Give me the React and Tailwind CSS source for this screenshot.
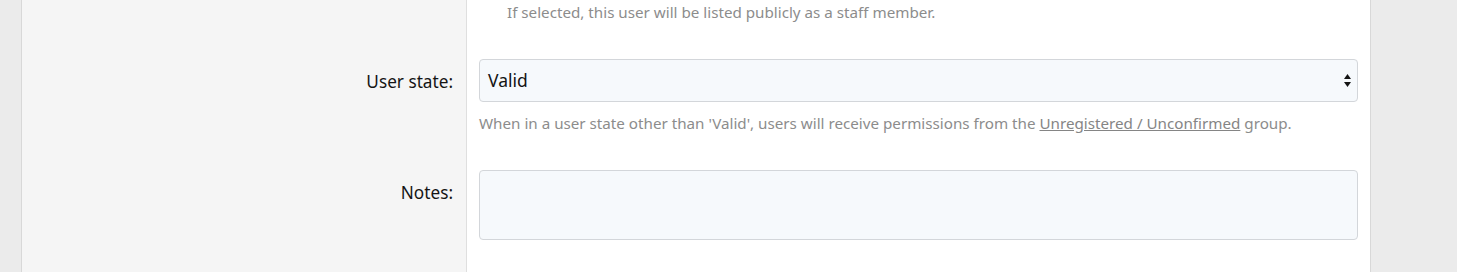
export default function App() {
  return (
    <div className="h-[272px] w-[1457px] overflow-hidden bg-[#ebebeb] pl-[21px] font-['Noto_Sans',sans-serif]">
      <div className="h-full w-[1350px] border-x border-[#d8d8d8] bg-white">
        {/* staff member hint (row cut off above) */}
        <div className="grid h-[40px] grid-cols-[445px_1fr]">
          <div className="border-r border-[#dfdfdf] bg-[#f5f5f5]" />
          <div className="pl-[40px] pt-[2px] text-[15.2px] leading-[20px] text-[#8c8c8c]">
            If selected, this user will be listed publicly as a staff member.
          </div>
        </div>

        {/* user state */}
        <div className="grid grid-cols-[445px_1fr]">
          <div className="border-r border-[#dfdfdf] bg-[#f5f5f5] pr-[13px] pt-[31px] text-right text-[17.2px] leading-[22px] text-[#141414]">
            User state:
          </div>
          <div className="pb-[18px] pl-[12px] pr-[12px] pt-[19px]">
            <div className="flex h-[43px] items-center justify-between rounded-[4px] border border-[#d3d6da] bg-[#f6f9fc] pl-[8px] pr-[6px] text-[17.5px] text-[#141414]">
              <span>Valid</span>
              <svg width="7" height="13" viewBox="0 0 7 13" className="fill-[#141414]">
                <path d="M3.5 0 L7 5 L0 5 Z" />
                <path d="M0 8 L7 8 L3.5 13 Z" />
              </svg>
            </div>
            <p className="mt-[11px] text-[15.2px] leading-[20px] text-[#8c8c8c]">
              When in a user state other than 'Valid', users will receive permissions from the{" "}
              <a href="#" className="text-[#858585] underline">
                Unregistered / Unconfirmed
              </a>{" "}
              group.
            </p>
          </div>
        </div>

        {/* notes */}
        <div className="grid h-[200px] grid-cols-[445px_1fr]">
          <div className="border-r border-[#dfdfdf] bg-[#f5f5f5] pr-[13px] pt-[31px] text-right text-[17.2px] leading-[22px] text-[#141414]">
            Notes:
          </div>
          <div className="pl-[12px] pr-[12px] pt-[19px]">
            <textarea className="block h-[70px] w-full resize-none rounded-[4px] border border-[#d3d6da] bg-[#f6f9fc] outline-none" />
          </div>
        </div>
      </div>
    </div>
  );
}
